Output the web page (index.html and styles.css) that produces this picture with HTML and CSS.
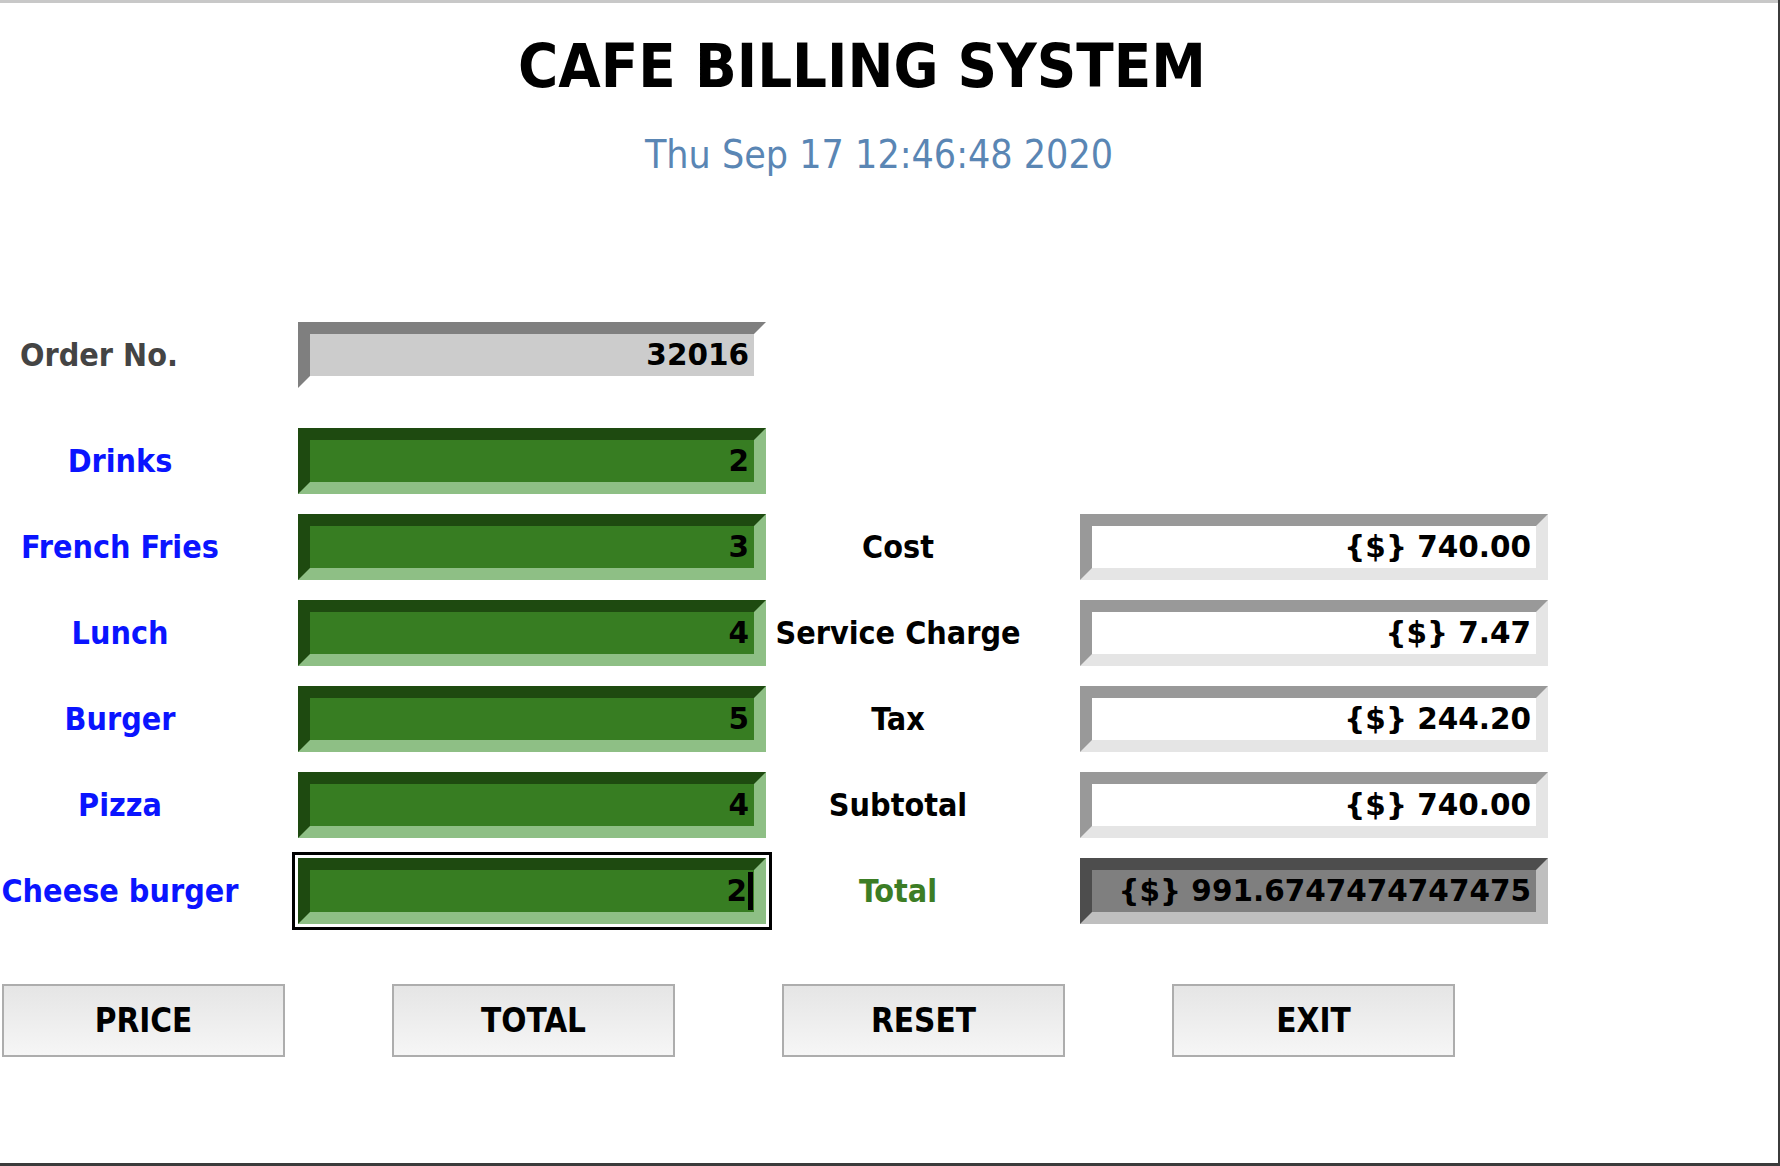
FILE: index.html
```html
<!DOCTYPE html>
<html lang="en">
<head>
<meta charset="utf-8">
<title>Cafe Billing System</title>
<link rel="stylesheet" href="styles.css">
</head>
<body>
<div class="window">
  <header class="header">
    <h1 class="title">CAFE BILLING SYSTEM</h1>
    <div class="date">Thu Sep 17 12:46:48 2020</div>
  </header>

  <main class="form">
    <div class="label label-order first col-a">Order No.</div>
    <div class="field field-order first col-b">32016</div>

    <div class="label label-item col-a">Drinks</div>
    <div class="field field-green col-b">2</div>

    <div class="label label-item col-a">French Fries</div>
    <div class="field field-green col-b">3</div>
    <div class="label label-mid col-c">Cost</div>
    <div class="field field-cost col-d">{$} 740.00</div>

    <div class="label label-item col-a">Lunch</div>
    <div class="field field-green col-b">4</div>
    <div class="label label-mid col-c">Service Charge</div>
    <div class="field field-cost col-d">{$} 7.47</div>

    <div class="label label-item col-a">Burger</div>
    <div class="field field-green col-b">5</div>
    <div class="label label-mid col-c">Tax</div>
    <div class="field field-cost col-d">{$} 244.20</div>

    <div class="label label-item col-a">Pizza</div>
    <div class="field field-green col-b">4</div>
    <div class="label label-mid col-c">Subtotal</div>
    <div class="field field-cost col-d">{$} 740.00</div>

    <div class="label label-item col-a">Cheese burger</div>
    <div class="field field-green focused col-b"><span>2</span><span class="caret"></span></div>
    <div class="label label-mid label-total col-c">Total</div>
    <div class="field field-total col-d">{$} 991.6747474747475</div>
  </main>

  <div class="buttons">
    <button class="btn" type="button">PRICE</button>
    <button class="btn" type="button">TOTAL</button>
    <button class="btn" type="button">RESET</button>
    <button class="btn" type="button">EXIT</button>
  </div>
</div>
</body>
</html>
```
FILE: styles.css
```css
html, body {
  margin: 0;
  padding: 0;
}

body {
  background: #3b3b3b;
  width: 1780px;
  height: 1166px;
  overflow: hidden;
}

.window {
  width: 1778px;
  height: 1163px;
  box-sizing: border-box;
  background: #ffffff;
  border-top: 3px solid #c8c8c8;
  overflow: hidden;
}

.header {
  display: flex;
  flex-direction: column;
  align-items: stretch;
}

.title {
  margin: 31.6px 0 0 0;
  padding-right: 54px;
  text-align: center;
  font-family: "DejaVu Sans Condensed", "DejaVu Sans", sans-serif;
  font-stretch: condensed;
  font-weight: bold;
  font-size: 61px;
  line-height: 61px;
  color: #000000;
}

.date {
  margin-top: 39.8px;
  padding-right: 20px;
  text-align: center;
  font-family: "DejaVu Sans Condensed", "DejaVu Sans", sans-serif;
  font-stretch: condensed;
  font-weight: normal;
  font-size: 39px;
  line-height: 39px;
  color: #5a86b4;
}

.form {
  margin-top: 147.6px;
  display: grid;
  grid-template-columns: 298px 468px 314px 468px;
  row-gap: 20px;
  align-items: center;
}

.col-a { grid-column: 1; }
.col-b { grid-column: 2; }
.col-c { grid-column: 3; }
.col-d { grid-column: 4; }

.first {
  margin-bottom: 20px;
}

.label {
  font-family: "DejaVu Sans Condensed", "DejaVu Sans", sans-serif;
  font-stretch: condensed;
  font-weight: bold;
  font-size: 32px;
  line-height: 40px;
  white-space: nowrap;
}

.label-order {
  color: #444444;
  padding-left: 20px;
}

.label-item {
  width: 240px;
  text-align: center;
  color: #0a14ff;
}

.label-mid {
  width: 264px;
  text-align: center;
  color: #000000;
}

.label-total {
  color: #3c7d25;
}

.field {
  height: 66px;
  box-sizing: border-box;
  border-width: 12px;
  border-style: solid;
  padding-right: 5px;
  padding-top: 1px;
  display: flex;
  align-items: center;
  justify-content: flex-end;
  font-family: "DejaVu Sans", sans-serif;
  font-weight: bold;
  font-size: 29.5px;
  color: #000000;
  white-space: nowrap;
}

.field-order {
  background: #cccccc;
  border-color: #7f7f7f #ffffff #ffffff #7f7f7f;
}

.field-green {
  background: #377d22;
  border-color: #1e4a10 #8ebf85 #8ebf85 #1e4a10;
}

.field-cost {
  background: #ffffff;
  border-color: #999999 #e5e5e5 #e5e5e5 #999999;
}

.field-total {
  background: #7f7f7f;
  border-color: #4d4d4d #bfbfbf #bfbfbf #4d4d4d;
}

.focused {
  outline: 3px solid #000000;
  outline-offset: 3px;
  padding-right: 1px;
}

.caret {
  display: inline-block;
  width: 5px;
  height: 38px;
  background: #000000;
  margin-left: 1px;
}

.buttons {
  margin-top: 60px;
  padding-left: 2px;
  display: flex;
  gap: 107px;
}

.btn {
  width: 283px;
  height: 73px;
  box-sizing: border-box;
  border: 2px solid #adadad;
  border-radius: 0;
  background: linear-gradient(#e5e5e5, #f6f6f6);
  font-family: "DejaVu Sans Condensed", "DejaVu Sans", sans-serif;
  font-stretch: condensed;
  font-weight: bold;
  font-size: 33px;
  color: #000000;
  padding: 0;
  margin: 0;
}
```
